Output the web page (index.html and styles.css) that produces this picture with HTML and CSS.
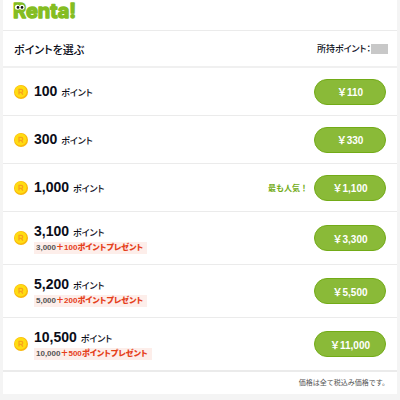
FILE: index.html
```html
<!DOCTYPE html>
<html lang="ja">

<head>
    <meta charset="UTF-8">
    <meta name="viewport" content="width=device-width, initial-scale=1.0">
    <title>Renta! ポイントを選ぶ</title>
    <link rel="stylesheet" href="styles.css">
</head>

<body>
    <svg width="0" height="0" class="sprite" aria-hidden="true">
        <symbol id="coin" viewBox="0 0 14 14">
            <circle cx="7" cy="7" r="7" fill="#f9b70b" />
            <circle cx="6.6" cy="6.6" r="6" fill="#ffdc12" />
            <path d="M5 9.6V4.4h2.2a1.5 1.5 0 0 1 0 3H5M7.3 7.4l1.6 2.2" fill="none" stroke="#f8a21c" stroke-width="1.3" />
        </symbol>
    </svg>

    <div class="page">
        <header>
            <svg class="logo" width="72" height="22" viewBox="0 0 72 22" role="img" aria-label="Renta!">
                <text class="logo-text" x="0" y="18">Renta!</text>
                <circle cx="4.4" cy="7.2" r="2.5" fill="#fff" />
                <circle cx="9" cy="7.2" r="2.5" fill="#fff" />
                <circle cx="5" cy="7.4" r="1.3" fill="#111" />
                <circle cx="9" cy="7.4" r="1.3" fill="#111" />
            </svg>
        </header>

        <main>
            <div class="heading">
                <h1>ポイントを選ぶ</h1>
                <p class="balance">所持ポイント：<span class="mask"></span></p>
            </div>

            <ul class="plans">
                <li>
                    <svg class="coin" aria-hidden="true"><use href="#coin" /></svg>
                    <div class="plan">
                        <p class="points">100 <small>ポイント</small></p>
                    </div>
                    <button type="button">￥110</button>
                </li>
                <li>
                    <svg class="coin" aria-hidden="true"><use href="#coin" /></svg>
                    <div class="plan">
                        <p class="points">300 <small>ポイント</small></p>
                    </div>
                    <button type="button">￥330</button>
                </li>
                <li>
                    <svg class="coin" aria-hidden="true"><use href="#coin" /></svg>
                    <div class="plan">
                        <p class="points">1,000 <small>ポイント</small></p>
                    </div>
                    <span class="popular">最も人気！</span>
                    <button type="button">￥1,100</button>
                </li>
                <li class="tall">
                    <svg class="coin" aria-hidden="true"><use href="#coin" /></svg>
                    <div class="plan">
                        <p class="points">3,100 <small>ポイント</small></p>
                        <p class="bonus">3,000<b>＋100ポイントプレゼント</b></p>
                    </div>
                    <button type="button">￥3,300</button>
                </li>
                <li class="tall">
                    <svg class="coin" aria-hidden="true"><use href="#coin" /></svg>
                    <div class="plan">
                        <p class="points">5,200 <small>ポイント</small></p>
                        <p class="bonus">5,000<b>＋200ポイントプレゼント</b></p>
                    </div>
                    <button type="button">￥5,500</button>
                </li>
                <li class="tall">
                    <svg class="coin" aria-hidden="true"><use href="#coin" /></svg>
                    <div class="plan">
                        <p class="points">10,500 <small>ポイント</small></p>
                        <p class="bonus">10,000<b>＋500ポイントプレゼント</b></p>
                    </div>
                    <button type="button">￥11,000</button>
                </li>
            </ul>

            <p class="note">価格は全て税込み価格です。</p>
        </main>
    </div>
</body>

</html>
```
FILE: styles.css
```css
* {
    box-sizing: border-box;
    margin: 0;
    padding: 0;
}

body {
    background: #f4f4f4;
    color: #0b0d18;
    font-family: "Liberation Sans", "Noto Sans CJK JP", sans-serif;
    font-feature-settings: "palt";
    font-size: 8px;
}

.sprite {
    display: block;
}

.page {
    margin: 0 3px;
    background: #fff;
}

header {
    height: 31px;
    padding: 0 10px;
    border-bottom: 1px solid #ebebeb;
}

.logo {
    display: block;
    overflow: visible;
}

.logo-text {
    font-family: Inter, sans-serif;
    font-size: 20px;
    font-weight: 700;
    fill: #84bd22;
    stroke: #84bd22;
    stroke-width: 1.4px;
    stroke-linejoin: round;
}

.heading {
    display: flex;
    align-items: center;
    justify-content: space-between;
    height: 37px;
    padding: 0 9px 0 11px;
    border-bottom: 2px solid #f0f0f0;
}

h1 {
    font-size: 11px;
    font-weight: 500;
}

.balance {
    display: flex;
    align-items: center;
    font-size: 9px;
    font-weight: 500;
}

.mask {
    width: 17px;
    height: 10px;
    background: #c8c8c8;
}

.plans {
    list-style: none;
    border-bottom: 1px solid #ebebeb;
}

.plans li {
    display: flex;
    align-items: center;
    height: 48px;
    padding: 0 11px;
    border-bottom: 1px solid #ebebeb;
}

.plans .tall {
    height: 53px;
}

.coin {
    width: 14px;
    height: 14px;
    margin-right: 6px;
}

.plan {
    flex: 1;
}

.points {
    font-size: 14px;
    font-weight: bold;
    line-height: 18px;
}

.points small {
    font-size: 9px;
    font-weight: 500;
}

.bonus {
    display: inline-block;
    padding: 0 4px 0 2px;
    background: #fdeeea;
    color: #555;
    font-size: 8px;
    font-weight: bold;
    line-height: 12px;
    vertical-align: top;
}

.bonus b {
    color: #e5401a;
}

.popular {
    margin-right: 6px;
    color: #72ab17;
    font-feature-settings: normal;
    font-weight: bold;
}

button {
    width: 72px;
    height: 26px;
    border: 1px solid #72ab17;
    border-radius: 13px;
    background: #8aba38;
    color: #fff;
    font-family: inherit;
    font-size: 10px;
    font-weight: bold;
    cursor: pointer;
}

.note {
    padding: 0 8px;
    color: #555;
    font-feature-settings: normal;
    font-size: 7px;
    line-height: 22px;
    text-align: right;
}
```
